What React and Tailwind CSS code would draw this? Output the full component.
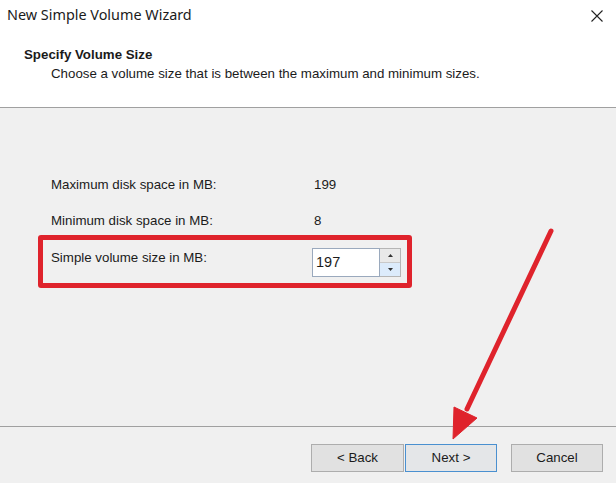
export default function App() {
  const body = { fontFamily: '"Liberation Sans", Arial, sans-serif' };
  return (
    <div className="relative w-[616px] h-[483px] bg-[#f0f0f0] text-[#1b1b1b] overflow-hidden" style={body}>
      {/* header */}
      <div className="h-[108px] bg-white border-b border-[#a0a0a0] flex flex-col">
        <div className="flex items-center justify-between h-[30px] pl-[7px] pr-[13px]">
          <span className="text-[14.4px] text-[#1b1b1b]" style={{ fontFamily: '"Noto Sans", sans-serif' }}>
            New Simple Volume Wizard
          </span>
          <svg width="12" height="12" viewBox="0 0 12 12" className="mt-[1px]">
            <path d="M0.5 0.5 L11.5 11.5 M11.5 0.5 L0.5 11.5" stroke="#222" strokeWidth="1.1" fill="none" />
          </svg>
        </div>
        <div className="pl-[24px] pt-[16px] text-[13.3px] font-bold leading-[18px]">Specify Volume Size</div>
        <div className="pl-[51px] pt-[1px] text-[13.3px] leading-[18px]">
          Choose a volume size that is between the maximum and minimum sizes.
        </div>
      </div>

      {/* main */}
      <div className="h-[318px] pt-[67px] text-[13.3px]">
        <div className="flex items-center h-[20px] pl-[51px]">
          <span className="w-[263px]">Maximum disk space in MB:</span>
          <span>199</span>
        </div>
        <div className="flex items-center h-[20px] pl-[51px] mt-[16px]">
          <span className="w-[263px]">Minimum disk space in MB:</span>
          <span>8</span>
        </div>
        <div className="ml-[38px] mt-[4px] w-[374px] h-[53px] border-[5px] border-[#df232c] rounded-[3px] flex items-start pl-[8px] pt-[8px]">
          <span className="w-[261px] mt-[2px] leading-[16px]">Simple volume size in MB:</span>
          <div className="flex h-[29px]">
            <div className="w-[68px] h-full bg-white border border-[#9aa9bd] flex items-center pl-[3px] text-[14.5px]">197</div>
            <div className="w-[21px] h-full flex flex-col border border-l-0 border-[#b5b5b5]">
              <div className="flex-1 bg-[#e9e9e9] flex items-center justify-center border-b border-[#c9c9c9]">
                <svg width="5" height="3" viewBox="0 0 5 3"><path d="M0 3 L2.5 0 L5 3 Z" fill="#333" /></svg>
              </div>
              <div className="flex-1 bg-[#dcebfb] flex items-center justify-center">
                <svg width="5" height="3" viewBox="0 0 5 3"><path d="M0 0 L2.5 3 L5 0 Z" fill="#333" /></svg>
              </div>
            </div>
          </div>
        </div>
      </div>

      {/* footer */}
      <div className="border-t border-[#a0a0a0] flex justify-end pt-[17px] pr-[13px] text-[13.3px]">
        <button className="w-[93px] h-[28px] bg-[#e1e1e1] border border-[#adadad]">&lt; Back</button>
        <button className="w-[92px] h-[28px] ml-[1px] bg-[#e4e6e8] border border-[#4a90d0]">Next &gt;</button>
        <button className="w-[92px] h-[28px] ml-[14px] bg-[#e1e1e1] border border-[#adadad]">Cancel</button>
      </div>

      {/* annotation arrow */}
      <svg className="absolute inset-0 pointer-events-none" width="616" height="483" viewBox="0 0 616 483">
        <line x1="551" y1="231" x2="467" y2="409" stroke="#df232c" strokeWidth="5" strokeLinecap="round" />
        <path d="M453 439 L454 407 L477 418 Z" fill="#df232c" stroke="#df232c" strokeWidth="1" strokeLinejoin="round" />
      </svg>
    </div>
  );
}
